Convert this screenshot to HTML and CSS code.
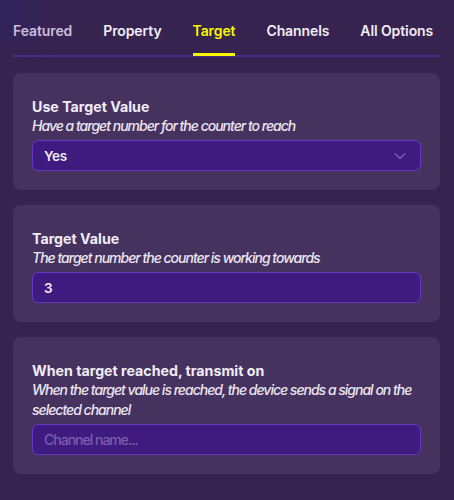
FILE: index.html
```html
<!DOCTYPE html>
<html>
<head>
<meta charset="utf-8">
<link rel="stylesheet" href="styles.css">
</head>
<body>
<div class="page">
  <div class="blob"></div>
  <nav class="tabs">
    <span class="tab dim">Featured</span>
    <span class="tab">Property</span>
    <span class="tab active">Target</span>
    <span class="tab">Channels</span>
    <span class="tab">All Options</span>
  </nav>
  <div class="cards">
    <section class="card">
      <div class="title">Use Target Value</div>
      <div class="desc">Have a target number for the counter to reach</div>
      <div class="field select">
        <span>Yes</span>
        <svg class="chev" width="12" height="8" viewBox="0 0 12 8"><path d="M1 1.5 L6 6.5 L11 1.5" fill="none" stroke="#8663c4" stroke-width="1.2"/></svg>
      </div>
    </section>
    <section class="card">
      <div class="title">Target Value</div>
      <div class="desc">The target number the counter is working towards</div>
      <div class="field"><span>3</span></div>
    </section>
    <section class="card">
      <div class="title">When target reached, transmit on</div>
      <div class="desc">When the target value is reached, the device sends a signal on the selected channel</div>
      <div class="field"><span class="ph">Channel name...</span></div>
    </section>
  </div>
</div>
</body>
</html>
```
FILE: styles.css
```css
html, body {
  margin: 0;
  padding: 0;
  background: #372350;
}
.page {
  position: relative;
  width: 454px;
  height: 500px;
  overflow: hidden;
  font-family: Inter, "Liberation Sans", sans-serif;
  background: #372350;
  padding: 0 14px 0 13px;
  box-sizing: border-box;
}
.blob {
  position: absolute;
  left: -30px;
  top: -20px;
  width: 70px;
  height: 60px;
  border-radius: 50%;
  background: #2e2460;
  filter: blur(14px);
  opacity: 0.8;
}
.tabs {
  position: relative;
  display: flex;
  gap: 31px;
  height: 57px;
  align-items: flex-start;
  border-bottom: 2px solid #4a2b8c;
  box-sizing: border-box;
  white-space: nowrap;
}
.tab {
  font-size: 14px;
  font-weight: 600;
  letter-spacing: -0.1px;
  color: #f1ecf6;
  line-height: 20px;
  padding-top: 21px;
  height: 36px;
  box-sizing: border-box;
  position: relative;
}
.tab.dim { color: #c9bdd9; }
.tab.active { color: #f7f700; }
.tab.active::after {
  content: "";
  position: absolute;
  left: 0;
  right: 0;
  top: 53px;
  height: 3px;
  background: #f7f700;
}
.cards {
  display: flex;
  flex-direction: column;
  gap: 15px;
  padding-top: 16px;
}
.card {
  background: #46325f;
  border-radius: 8px;
  padding: 22px 19px 19px 19px;
}
.title {
  font-size: 14.2px;
  font-weight: 700;
  color: #f1ecf6;
  line-height: 20px;
  padding-top: 2px;
  margin-bottom: -1px;
}
.desc {
  font-size: 14px;
  font-style: italic;
  font-weight: 500;
  letter-spacing: -1px;
  color: #ece6f2;
  line-height: 20px;
}
.field {
  margin-top: 4px;
  height: 31px;
  box-sizing: border-box;
  background: #3f1a7f;
  border: 1px solid #6238c4;
  border-radius: 6px;
  display: flex;
  align-items: center;
  justify-content: space-between;
  padding: 0 14px 0 11px;
  font-size: 13.5px;
  font-weight: 600;
  letter-spacing: -0.3px;
  color: #f1ecf6;
}
.ph { color: #7c5eae; font-weight: 500; letter-spacing: -1px; font-size: 14px; }
.chev { display: block; }
```
